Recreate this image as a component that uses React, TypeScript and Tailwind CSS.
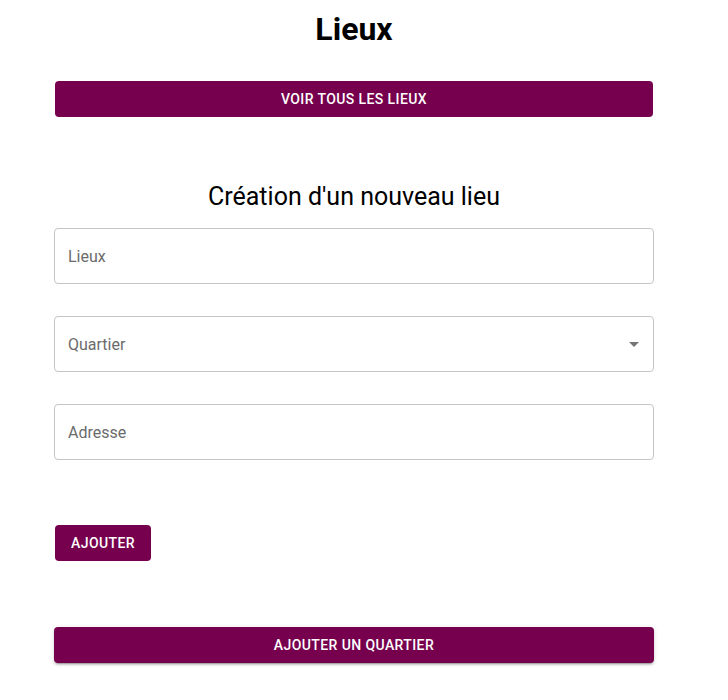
import { useState } from "react";

const Field = ({ label, select }: { label: string; select?: boolean }) => {
    const [value, setValue] = useState("");
    return (
        <div className="relative h-[56px] w-full rounded-[4px] border border-[#c4c4c4] bg-white">
            <input
                value={value}
                onChange={(e) => setValue(e.target.value)}
                placeholder={label}
                className="h-full w-full bg-transparent px-[13px] text-[16px] text-[#222] placeholder:text-[#6b6b6b] outline-none"
            />
            {select && (
                <svg
                    className="pointer-events-none absolute right-[7px] top-[15px] h-6 w-6 text-[#757575]"
                    viewBox="0 0 24 24"
                    fill="currentColor"
                >
                    <path d="M7 10l5 5 5-5z" />
                </svg>
            )}
        </div>
    );
};

export default function App() {
    return (
        <div className="min-h-[700px] w-full bg-white font-['Roboto',sans-serif] text-black">
            <div className="ml-[54px] w-[600px] flex flex-col">
                <h1 className="mt-[9px] text-center text-[32px] font-bold leading-[40px]">
                    Lieux
                </h1>
                <button className="mx-px mt-[32px] h-[36px] rounded-[4px] bg-[#76004e] text-[14px] font-medium uppercase tracking-[0.4px] text-white">
                    Voir tous les lieux
                </button>
                <h2 className="mt-[64px] text-center text-[25px] leading-[32px]">
                    Création d'un nouveau lieu
                </h2>
                <div className="mt-[15px] flex flex-col gap-[32px]">
                    <Field label="Lieux" />
                    <Field label="Quartier" select />
                    <Field label="Adresse" />
                </div>
                <div className="mt-[65px] flex">
                    <button className="ml-px h-[36px] w-[96px] rounded-[4px] bg-[#76004e] text-[14px] font-medium uppercase tracking-[0.4px] text-white">
                        Ajouter
                    </button>
                </div>
                <button className="mt-[66px] h-[36px] rounded-[4px] bg-[#76004e] text-[14px] font-medium uppercase tracking-[0.4px] text-white shadow-[0px_3px_1px_-2px_rgba(0,0,0,0.2),0px_2px_2px_0px_rgba(0,0,0,0.14),0px_1px_5px_0px_rgba(0,0,0,0.12)]">
                    Ajouter un quartier
                </button>
            </div>
        </div>
    );
}
